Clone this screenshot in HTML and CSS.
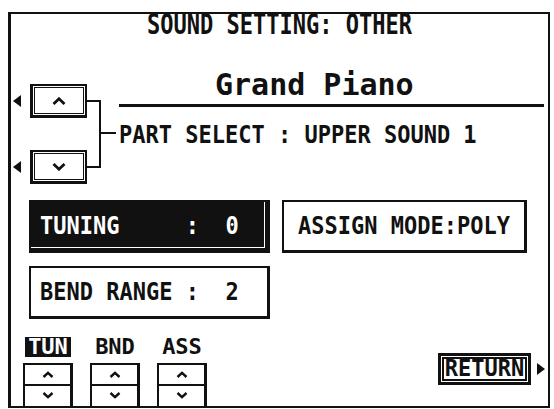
FILE: index.html
```html
<!DOCTYPE html>
<html lang="en">
<head>
  <meta charset="UTF-8">
  <title>Sound Setting: Other</title>
  <link rel="stylesheet" href="styles.css">
</head>
<body>

<div class="screen">
  <h1 class="title"><span class="lcd">SOUND SETTING: OTHER</span></h1>

  <!-- Part selector + current voice -->
  <div class="part">
    <div class="selector">
      <div class="sel-buttons">
        <div class="sel-row">
          <span class="pointer"></span>
          <div class="key">
            <svg class="chev" width="14" height="8" viewBox="0 0 14 8"><polyline points="1.5,7 7,1.8 12.5,7"/></svg>
          </div>
        </div>
        <div class="sel-row">
          <span class="pointer"></span>
          <div class="key">
            <svg class="chev" width="14" height="8" viewBox="0 0 14 8"><polyline points="1.5,1 7,6.2 12.5,1"/></svg>
          </div>
        </div>
      </div>
      <div class="bracket"></div>
      <div class="tick"></div>
    </div>
    <div class="part-info">
      <div class="voice">Grand Piano</div>
      <div class="part-line"><span class="lcd">PART SELECT : UPPER SOUND 1</span></div>
    </div>
  </div>

  <!-- Parameters -->
  <div class="params">
    <div class="param active"><span class="lcd">TUNING     :  0</span></div>
    <div class="param centered"><span class="lcd">ASSIGN MODE:POLY</span></div>
    <div class="param"><span class="lcd">BEND RANGE :  2</span></div>
  </div>

  <div class="footer">
    <div class="spinners">
      <div class="spin-col">
        <span class="tag on">TUN</span>
        <div class="spinner">
          <div class="half"><svg class="chev small" width="12" height="7" viewBox="0 0 12 7"><polyline points="1.5,6 6,1.8 10.5,6"/></svg></div>
          <div class="half"><svg class="chev small" width="12" height="7" viewBox="0 0 12 7"><polyline points="1.5,1 6,5.2 10.5,1"/></svg></div>
        </div>
      </div>
      <div class="spin-col">
        <span class="tag">BND</span>
        <div class="spinner">
          <div class="half"><svg class="chev small" width="12" height="7" viewBox="0 0 12 7"><polyline points="1.5,6 6,1.8 10.5,6"/></svg></div>
          <div class="half"><svg class="chev small" width="12" height="7" viewBox="0 0 12 7"><polyline points="1.5,1 6,5.2 10.5,1"/></svg></div>
        </div>
      </div>
      <div class="spin-col">
        <span class="tag">ASS</span>
        <div class="spinner">
          <div class="half"><svg class="chev small" width="12" height="7" viewBox="0 0 12 7"><polyline points="1.5,6 6,1.8 10.5,6"/></svg></div>
          <div class="half"><svg class="chev small" width="12" height="7" viewBox="0 0 12 7"><polyline points="1.5,1 6,5.2 10.5,1"/></svg></div>
        </div>
      </div>
    </div>
    <div class="return-wrap">
      <div class="return-btn"><span class="lcd">RETURN</span></div>
      <span class="pointer right"></span>
    </div>
  </div>
</div>

</body>
</html>
```

FILE: styles.css
```css
body {
  margin: 0;
  background: #fff;
  color: #111;
  font-family: "DejaVu Sans Mono", "Liberation Mono", monospace;
  font-weight: bold;
  font-size: 22px;
  line-height: 22px;
}
.screen {
  box-sizing: border-box;
  width: 542px;
  height: 396px;
  margin: 12px 0 0 8px;
  border: 2px solid #111;
  border-left-width: 3px;
}
/* tall LCD lettering */
.lcd {
  display: inline-block;
  white-space: pre;
  transform: scaleY(1.15);
}
.title {
  margin: 0;
  font-size: 22px;
  line-height: 22px;
  text-align: center;
}
.title .lcd {
  transform: scaleY(1.25);
}

/* part selector */
.part {
  display: flex;
  align-items: flex-start;
  margin-top: 34px;
}
.selector {
  display: flex;
  align-items: flex-start;
  margin-top: 14px;
}
.sel-buttons {
  display: flex;
  flex-direction: column;
  gap: 32px;
}
.sel-row {
  display: flex;
  align-items: center;
}
.pointer {
  width: 0;
  height: 0;
  margin-left: 2px;
  border-top: 6px solid transparent;
  border-bottom: 6px solid transparent;
  border-right: 8px solid #111;
}
.pointer.right {
  margin-left: 6px;
  border-right: none;
  border-left: 8px solid #111;
}
.key {
  box-sizing: border-box;
  width: 57px;
  height: 34px;
  margin-left: 9px;
  display: flex;
  align-items: center;
  justify-content: center;
  border: 2px solid #111;
  border-left-width: 3px;
  border-bottom-width: 3px;
  box-shadow: inset 0 0 0 1px #fff, inset 0 0 0 2px #111;
}
.chev polyline {
  fill: none;
  stroke: #111;
  stroke-width: 2.8;
}
.chev.small polyline {
  stroke-width: 2.4;
}
.bracket {
  box-sizing: border-box;
  width: 14px;
  height: 68px;
  margin-top: 16px;
  border: 2px solid #111;
  border-left: none;
}
.tick {
  width: 15px;
  margin-top: 48px;
  border-top: 2px solid #111;
}
.part-info {
  flex: 1;
  margin: 0 4px 0 3px;
}
.voice {
  padding: 0 0 4px 96px;
  font-size: 30px;
  line-height: 30px;
  border-bottom: 3px solid #111;
}
.part-line {
  margin-top: 17px;
}

/* parameter boxes */
.params {
  display: grid;
  grid-template-columns: 241px 245px;
  grid-auto-rows: 53px;
  column-gap: 12px;
  row-gap: 13px;
  margin: 16px 0 0 18px;
}
.param {
  box-sizing: border-box;
  display: flex;
  align-items: center;
  padding-left: 9px;
  border: 2px solid #111;
  border-right-width: 3px;
  border-bottom-width: 3px;
}
.param.centered {
  justify-content: center;
  padding-left: 0;
}
.param.active {
  background: #111;
  color: #fff;
  box-shadow: inset -2px -2px 0 #111, inset -3px -3px 0 #fff;
}

/* bottom row */
.footer {
  display: flex;
  align-items: flex-start;
  margin-top: 18px;
}
.spinners {
  display: flex;
  gap: 17px;
  margin-left: 12px;
}
.spin-col {
  display: flex;
  flex-direction: column;
  align-items: center;
  width: 50px;
}
.tag {
  padding: 0 3px;
  line-height: 20px;
}
.tag.on {
  background: #111;
  color: #fff;
}
.spinner {
  box-sizing: border-box;
  width: 50px;
  height: 46px;
  margin-top: 6px;
  border: 2px solid #111;
  border-right-width: 3px;
}
.half {
  height: 19px;
  display: flex;
  align-items: center;
  justify-content: center;
}
.half + .half {
  border-top: 2px solid #111;
}
.return-wrap {
  display: flex;
  align-items: center;
  margin: 16px 3px 0 auto;
}
.return-btn {
  box-sizing: border-box;
  width: 93px;
  height: 32px;
  display: flex;
  align-items: center;
  justify-content: center;
  border: 3px solid #111;
  box-shadow: inset 0 0 0 1px #fff, inset 0 0 0 3px #111;
}
.return-btn .lcd {
  transform: scaleY(1.05);
}
```
